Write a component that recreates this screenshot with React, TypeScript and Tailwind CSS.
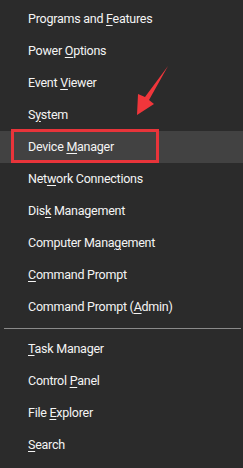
import React from "react";

type Item = { pre: string; key: string; post: string; hl?: boolean };

const top: Item[] = [
  { pre: "Programs and ", key: "F", post: "eatures" },
  { pre: "Power ", key: "O", post: "ptions" },
  { pre: "Event ", key: "V", post: "iewer" },
  { pre: "S", key: "y", post: "stem" },
  { pre: "Device ", key: "M", post: "anager", hl: true },
  { pre: "Net", key: "w", post: "ork Connections" },
  { pre: "Dis", key: "k", post: " Management" },
  { pre: "Computer Mana", key: "g", post: "ement" },
  { pre: "", key: "C", post: "ommand Prompt" },
  { pre: "Command Prompt (", key: "A", post: "dmin)" },
];

const bottom: Item[] = [
  { pre: "", key: "T", post: "ask Manager" },
  { pre: "Control ", key: "P", post: "anel" },
  { pre: "File ", key: "E", post: "xplorer" },
  { pre: "", key: "S", post: "earch" },
];

function Row({ item }: { item: Item }) {
  return (
    <div
      className={
        "relative h-8 flex items-center pl-[28px] " +
        (item.hl ? "bg-[#424242]" : "")
      }
    >
      <span className="whitespace-pre">
        {item.pre}
        <span className="underline underline-offset-[2px] decoration-1">{item.key}</span>
        {item.post}
      </span>
      {item.hl && (
        <div className="absolute left-[11px] top-[-2px] w-[148px] h-[34px] border-[3px] border-[#e8343a]" />
      )}
    </div>
  );
}

export default function App() {
  return (
    <div
      className="relative w-[243px] h-[468px] bg-[#2b2b2b] text-[#f4f4f4] text-[12.5px] tracking-[-0.25px] pt-[3px] overflow-hidden"
      style={{ fontFamily: '"Roboto", "Noto Sans", sans-serif' }}
    >
      {top.map((it, i) => (
        <Row key={i} item={it} />
      ))}
      <div className="h-[10px] pt-[5px] pl-[4px] pr-[2px]">
        <div className="h-px bg-[#8a8a8a]" />
      </div>
      {bottom.map((it, i) => (
        <Row key={i} item={it} />
      ))}
      <svg
        className="absolute left-0 top-0"
        width="243"
        height="468"
        viewBox="0 0 243 468"
      >
        <polygon
          points="168,66 149,100 154,104 137,115 138,94 145,97"
          fill="#f0363b"
        />
      </svg>
    </div>
  );
}
